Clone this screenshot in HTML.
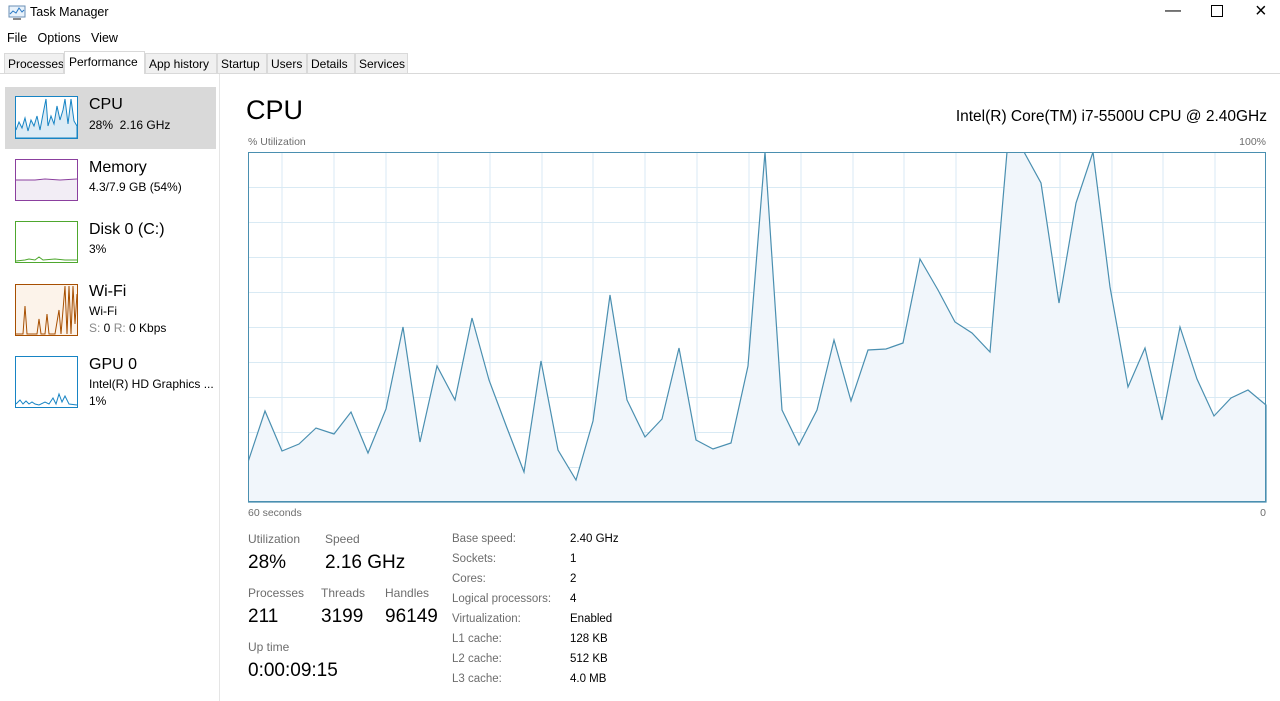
<!DOCTYPE html>
<html><head><meta charset="utf-8"><style>
body{margin:0;width:1280px;height:701px;background:#fff;font-family:"Liberation Sans",sans-serif;color:#000;position:relative;overflow:hidden}
.a{position:absolute;white-space:nowrap}
.tab{position:absolute;top:53px;height:20px;font-size:12px;line-height:20px;background:#f0f0f0;border:1px solid #d9d9d9;border-bottom:none;padding:0 0 0 3px;box-sizing:border-box;white-space:nowrap;overflow:hidden}
.lbl{font-size:12px;color:#6d6d6d}
.big{font-size:19px;color:#000}
</style></head><body>
<svg class="a" style="left:8px;top:5px" width="18" height="16"><rect x="1" y="1" width="16" height="11" fill="#e8f2fb" stroke="#6a8fb5"/><polyline points="2,9 5,6 8,8 11,3 14,7 16,5" fill="none" stroke="#2b79c4"/><rect x="5" y="13" width="8" height="2" fill="#888"/></svg>
<div class="a" style="left:30px;top:5px;font-size:12.5px">Task Manager</div>
<div class="a" style="left:1165px;top:2px;font-size:16px">&#8212;</div>
<div class="a" style="left:1211px;top:5px;width:10px;height:10px;border:1px solid #000"></div>
<div class="a" style="left:1255px;top:0px;font-size:20px">&#215;</div>
<div class="a" style="left:7px;top:31px;font-size:12.5px">File&nbsp;&nbsp; Options&nbsp;&nbsp; View</div>
<div class="a" style="left:0;top:73px;width:1280px;height:1px;background:#d9d9d9"></div>
<div class="tab" style="left:4px;width:60px">Processes</div>
<div class="tab" style="left:64px;width:81px;top:51px;height:23px;background:#fff;padding-left:4px">Performance</div>
<div class="tab" style="left:145px;width:72px">App history</div>
<div class="tab" style="left:217px;width:50px">Startup</div>
<div class="tab" style="left:267px;width:40px">Users</div>
<div class="tab" style="left:307px;width:48px">Details</div>
<div class="tab" style="left:355px;width:53px">Services</div>
<div class="a" style="left:219px;top:74px;width:1px;height:627px;background:#e5e5e5"></div>
<div class="a" style="left:5px;top:87px;width:211px;height:62px;background:#d9d9d9"></div>
<svg class="a" style="left:15px;top:96px" width="64" height="44"><rect x="0.5" y="0.5" width="62" height="42" fill="#fff" stroke="#1784c4"/><polyline points="1,34 4,26 7,32 10,22 13,35 16,24 19,30 22,20 25,34 28,18 31,3 33,30 36,20 39,28 42,10 45,24 48,14 50,3 53,28 56,3 59,25 62,30 62,42 1,42" fill="#dcebf5" stroke="#1784c4"/></svg>
<div class="a" style="left:89px;top:96px;font-size:16px">CPU</div>
<div class="a" style="left:89px;top:118px;font-size:12px">28%&nbsp; 2.16 GHz</div>
<svg class="a" style="left:15px;top:159px" width="64" height="43"><rect x="0.5" y="0.5" width="62" height="41" fill="#f2edf5" stroke="#8b3f9e"/><rect x="1" y="1" width="61" height="20" fill="#fff"/><polyline points="1,21 20,21 30,20 45,21 62,20" fill="none" stroke="#8b3f9e"/></svg>
<div class="a" style="left:89px;top:159px;font-size:16px">Memory</div>
<div class="a" style="left:89px;top:180px;font-size:12px">4.3/7.9 GB (54%)</div>
<svg class="a" style="left:15px;top:221px" width="64" height="43"><rect x="0.5" y="0.5" width="62" height="41" fill="#fff" stroke="#4ea72e"/><polyline points="1,40 10,39 14,38 20,39 24,36 28,39 40,38 50,39 62,39" fill="none" stroke="#4ea72e"/></svg>
<div class="a" style="left:89px;top:221px;font-size:16px">Disk 0 (C:)</div>
<div class="a" style="left:89px;top:242px;font-size:12px">3%</div>
<svg class="a" style="left:15px;top:284px" width="64" height="53"><rect x="0.5" y="0.5" width="62" height="51" fill="#fcf3ea" stroke="#a74f01"/><polyline points="1,50 8,50 10,22 12,50 22,50 24,35 26,50 30,50 32,30 34,50 40,50 44,26 46,50 50,2 52,50 54,2 56,50 58,2 60,40 62,10" fill="none" stroke="#a74f01"/></svg>
<div class="a" style="left:89px;top:283px;font-size:16px">Wi-Fi</div>
<div class="a" style="left:89px;top:304px;font-size:12px">Wi-Fi</div>
<div class="a" style="left:89px;top:321px;font-size:12px"><span style="color:#888">S:</span> 0 <span style="color:#888">R:</span> 0 Kbps</div>
<svg class="a" style="left:15px;top:356px" width="64" height="53"><rect x="0.5" y="0.5" width="62" height="51" fill="#fff" stroke="#1784c4"/><polyline points="1,48 5,44 8,48 11,45 14,48 17,46 20,48 24,49 30,46 34,48 38,42 41,48 44,38 47,46 50,40 54,48 62,49" fill="none" stroke="#1784c4"/></svg>
<div class="a" style="left:89px;top:356px;font-size:16px">GPU 0</div>
<div class="a" style="left:89px;top:377px;font-size:12px">Intel(R) HD Graphics ...</div>
<div class="a" style="left:89px;top:394px;font-size:12px">1%</div>
<div class="a" style="left:246px;top:95px;font-size:27px">CPU</div>
<div class="a" style="right:13px;top:108px;font-size:15.5px">Intel(R) Core(TM) i7-5500U CPU @ 2.40GHz</div>
<div class="a lbl" style="left:248px;top:136px;font-size:10.5px">% Utilization</div>
<div class="a lbl" style="right:14px;top:136px;font-size:10.5px">100%</div>
<svg class="a" style="left:248px;top:152px" width="1019" height="351">
<g stroke="#d9eaf4" stroke-width="1">
<path d="M34 0V350M86 0V350M138 0V350M190 0V350M242 0V350M294 0V350M345 0V350M397 0V350M449 0V350M501 0V350M553 0V350M605 0V350M656 0V350M708 0V350M760 0V350M812 0V350M864 0V350M915 0V350M967 0V350"/>
<path d="M0 35.5H1018M0 70.5H1018M0 105.5H1018M0 140.5H1018M0 175.5H1018M0 210.5H1018M0 245.5H1018M0 280.5H1018M0 315.5H1018"/>
</g>
<polygon fill="#f1f6fb" stroke="#4a8fb0" stroke-width="1.2" points="0,310 17,259 34,299 51,292 68,276 86,282 103,260 120,301 138,257 155,175 172,290 189,214 207,248 224,166 241,228 259,276 276,320 293,209 310,298 328,328 345,269 362,143 379,248 397,285 414,267 431,196 448,288 465,297 483,291 500,214 517,0 534,258 551,293 569,258 586,188 603,249 620,198 638,197 655,191 672,107 690,138 707,170 724,181 742,200 759,0 776,0 793,31 811,151 828,51 845,0 862,135 880,235 897,196 914,268 932,175 949,227 966,264 983,246 1000,238 1018,253 1018,350 0,350"/>
<rect x="0.5" y="0.5" width="1017" height="349" fill="none" stroke="#4a8fb0"/>
</svg>
<div class="a lbl" style="left:248px;top:507px;font-size:10.5px">60 seconds</div>
<div class="a lbl" style="right:14px;top:507px;font-size:10.5px">0</div>
<div class="a lbl" style="left:248px;top:532px">Utilization</div>
<div class="a lbl" style="left:325px;top:532px">Speed</div>
<div class="a big" style="left:248px;top:552px">28%</div>
<div class="a big" style="left:325px;top:552px">2.16 GHz</div>
<div class="a lbl" style="left:248px;top:586px">Processes</div>
<div class="a lbl" style="left:321px;top:586px">Threads</div>
<div class="a lbl" style="left:385px;top:586px">Handles</div>
<div class="a big" style="left:248px;top:606px">211</div>
<div class="a big" style="left:321px;top:606px">3199</div>
<div class="a big" style="left:385px;top:606px">96149</div>
<div class="a lbl" style="left:248px;top:640px">Up time</div>
<div class="a big" style="left:248px;top:660px">0:00:09:15</div>
<div class="a lbl" style="left:452px;top:529px;font-size:11.5px;line-height:20px">Base speed:<br>Sockets:<br>Cores:<br>Logical processors:<br>Virtualization:<br>L1 cache:<br>L2 cache:<br>L3 cache:</div>
<div class="a" style="left:570px;top:529px;font-size:11.5px;line-height:20px">2.40 GHz<br>1<br>2<br>4<br>Enabled<br>128 KB<br>512 KB<br>4.0 MB</div>
</body></html>
